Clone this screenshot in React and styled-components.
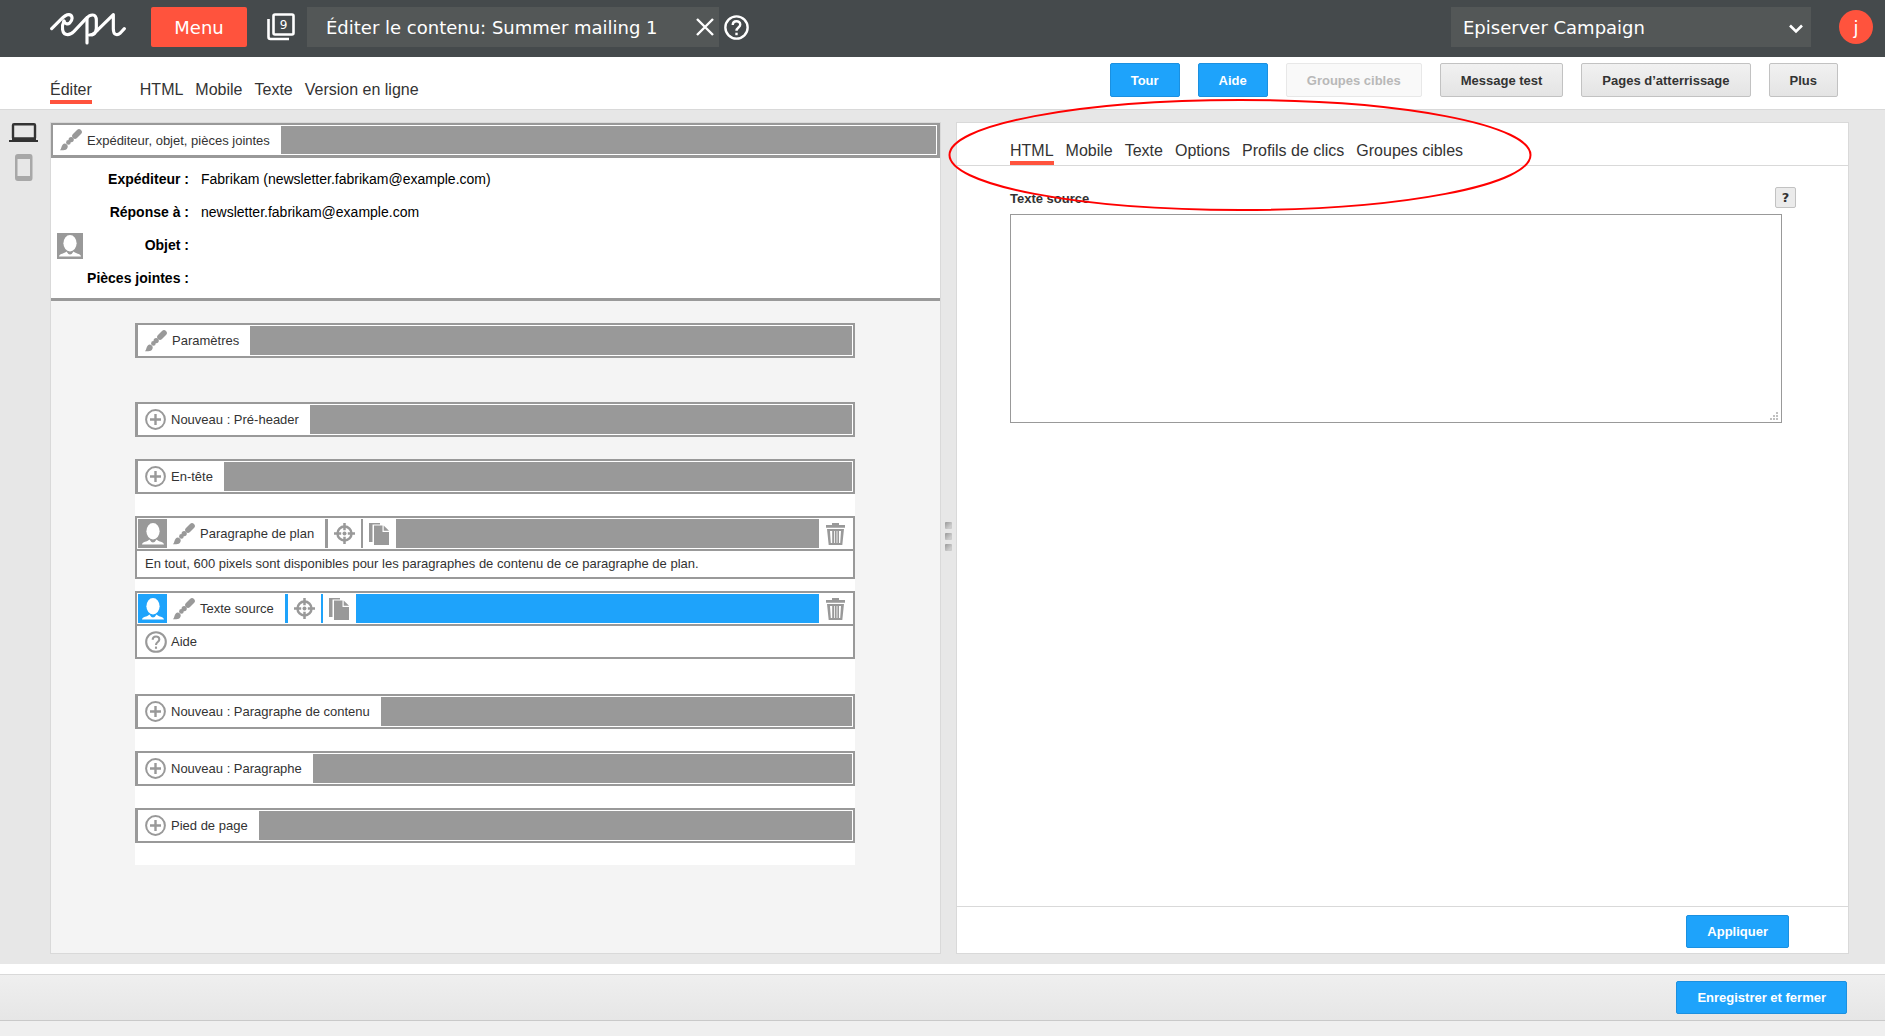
import styled, { createGlobalStyle } from "styled-components";

const App = () => {
    return (
        <AppStyled>
            <GlobalStyle />
            <TopBar />
            <SubNav />
            <Workspace>
                <DeviceRail />
                <TemplatePanel />
                <Splitter>
                    <i />
                    <i />
                    <i />
                </Splitter>
                <EditorPanel />
            </Workspace>
            <PageFooter />
        </AppStyled>
    );
};

export default App;

/* Icons ---------------------------*/
const EpiLogo = () => (
    <svg width="76" height="32" viewBox="0 0 228 96" fill="none" stroke="#ffffff" strokeWidth="9.5" strokeLinecap="round" strokeLinejoin="round">
        <path d="M5 47 L32 20 C44 8 50 4 57 5 C69 7 69 21 59 30 C53 35 45 32 42 25" />
        <path d="M42 24 C35 38 34 65 53 65 C60 65 65 62 72 55 L108 17 C121 2 139 1 139 22 L139 46 C138 64 126 66 118 66" />
        <path d="M111 14 L111 90" />
        <path d="M126 65 C134 63 138 57 144 50 L190 5 L190 48 C190 67 202 68 211 60 L223 47" />
    </svg>
);

const WindowsIcon = () => (
    <svg width="28" height="28" viewBox="0 0 28 28" fill="none" stroke="#ffffff">
        <rect x="6.5" y="1.5" width="20" height="20" rx="1.5" strokeWidth="2.6" />
        <path d="M1.5 6 V24 Q1.5 26 3.5 26 H22" strokeWidth="2.6" />
        <text x="16.5" y="16" fill="#ffffff" stroke="none" fontSize="12" textAnchor="middle">
            9
        </text>
    </svg>
);

const CloseIcon = () => (
    <svg width="18" height="18" viewBox="0 0 18 18" fill="none" stroke="#ffffff" strokeWidth="2.4">
        <path d="M1 1 L17 17 M17 1 L1 17" />
    </svg>
);

const HelpIcon = ({ size = 22 }) => (
    <svg width={size} height={size} viewBox="0 0 24 24" fill="none" stroke="currentColor" strokeWidth="2.3">
        <circle cx="12" cy="12" r="10.7" />
        <path d="M8.4 9.6 C8.4 4.8 15.6 4.8 15.6 9.2 C15.6 12 12 12 12 15.2" />
        <path d="M12 17 V19.4" />
    </svg>
);

const ChevronIcon = () => (
    <svg width="14" height="10" viewBox="0 0 14 10" fill="none" stroke="#ffffff" strokeWidth="2.6">
        <path d="M1 1.5 L7 7.5 L13 1.5" />
    </svg>
);

const LaptopIcon = () => (
    <svg width="30" height="20" viewBox="0 0 30 20" fill="none" stroke="#333333">
        <rect x="4" y="1.2" width="22" height="14.5" rx="1" strokeWidth="2.4" />
        <path d="M0 18 H29" strokeWidth="2" />
        <path d="M3 16 H27" strokeWidth="3" />
    </svg>
);

const PhoneIcon = () => (
    <svg width="18" height="28" viewBox="0 0 18 28">
        <path fill="#a8a8a8" fillRule="evenodd" d="M3 0 H15 Q17.5 0 17.5 3 V24 Q17.5 27 15 27 H3 Q0 27 0 24 V3 Q0 0 3 0 Z M2.5 5 V22 H15 V5 Z" />
    </svg>
);

const BrushIcon = () => (
    <svg width="22" height="22" viewBox="0 0 22 22" fill="#999999">
        <path d="M0 21.2 C1.8 19.5 1 17 3 15.2 C4.2 14.2 5.6 14.4 6.8 15.6 C8.2 17 8 18.8 6.8 19.9 C5.2 21.4 3 21.2 0 21.2 Z" />
        <circle cx="8.4" cy="13.4" r="2.3" />
        <circle cx="11.2" cy="10.6" r="2.6" />
        <path d="M15 7 L19 3" fill="none" stroke="#999999" strokeWidth="5.6" strokeLinecap="round" />
    </svg>
);

const PlusIcon = () => (
    <svg width="21" height="21" viewBox="0 0 21 21" fill="none" stroke="#999999" strokeWidth="2">
        <circle cx="10.5" cy="10.5" r="9.4" />
        <path d="M10.5 5 V16 M5 10.5 H16" strokeWidth="2.4" />
    </svg>
);

const TargetIcon = () => (
    <svg width="21" height="21" viewBox="0 0 21 21" fill="none" stroke="#999999" strokeWidth="2.5">
        <circle cx="10.5" cy="10.5" r="7" />
        <path d="M10.5 0 V7.2 M10.5 13.8 V21 M0 10.5 H7.2 M13.8 10.5 H21" />
        <circle cx="10.5" cy="10.5" r="2" fill="#999999" stroke="none" />
    </svg>
);

const CopyIcon = () => (
    <svg width="21" height="22" viewBox="0 0 21 22" fill="#999999">
        <path d="M0 0 H11 V1.5 H3.5 V19 H0 Z" />
        <path d="M5 2.5 H13.5 V9 H20 V22 H5 Z" />
        <path d="M14.7 2.5 L20 7.8 H14.7 Z" />
    </svg>
);

const TrashIcon = () => (
    <svg width="19" height="22" viewBox="0 0 19 22" fill="#999999">
        <path d="M6 0 H13 V2 H19 V4.8 H0 V2 H6 Z" />
        <path d="M1 6 H18 L16.3 22 H2.7 Z M4 8 L4.8 20 H6.2 V8 Z M8.2 8 V20 H9 V8 Z M10.6 8 V20 H11.4 V8 Z M13 8 V20 H14.2 L15 8 Z" fillRule="evenodd" />
    </svg>
);

const PersonIcon = () => (
    <svg width="22" height="22" viewBox="0 0 22 22" fill="#ffffff">
        <ellipse cx="11" cy="8.2" rx="6.6" ry="8.2" />
        <path d="M0 21.5 C0.5 18.5 5 19 7.5 16.5 Q9 19.4 11 19.4 Q13 19.4 14.5 16.5 C17 19 21.5 18.500 22 21.5 Z" />
    </svg>
);

/* Top bar ---------------------------*/
const TopBar = () => (
    <TopBarStyled>
        <LogoLink href="#" aria-label="Episerver">
            <EpiLogo />
        </LogoLink>
        <MenuButton type="button">Menu</MenuButton>
        <WindowsButton type="button">
            <WindowsIcon />
        </WindowsButton>
        <TitleBox>
            <h1>Éditer le contenu: Summer mailing 1</h1>
            <IconButton type="button" aria-label="Fermer">
                <CloseIcon />
            </IconButton>
        </TitleBox>
        <HelpButton type="button" aria-label="Aide">
            <HelpIcon size={25} />
        </HelpButton>
        <ProductSelect>
            <select aria-label="Produit" defaultValue="campaign">
                <option value="campaign">Episerver Campaign</option>
            </select>
            <ChevronIcon />
        </ProductSelect>
        <UserButton type="button">j</UserButton>
    </TopBarStyled>
);

const SubNav = () => (
    <SubNavStyled>
        <Tabs>
            <Tab href="#" $active $spaced>
                Éditer
            </Tab>
            <Tab href="#">HTML</Tab>
            <Tab href="#">Mobile</Tab>
            <Tab href="#">Texte</Tab>
            <Tab href="#">Version en ligne</Tab>
        </Tabs>
        <Actions>
            <Button type="button" $primary>
                Tour
            </Button>
            <Button type="button" $primary>
                Aide
            </Button>
            <Button type="button" disabled>
                Groupes cibles
            </Button>
            <Button type="button">Message test</Button>
            <Button type="button">Pages d’atterrissage</Button>
            <Button type="button">Plus</Button>
        </Actions>
    </SubNavStyled>
);

const DeviceRail = () => (
    <DeviceRailStyled>
        <IconButton type="button" aria-label="Ordinateur">
            <LaptopIcon />
        </IconButton>
        <IconButton type="button" aria-label="Mobile">
            <PhoneIcon />
        </IconButton>
    </DeviceRailStyled>
);

/* Template panel ---------------------------*/
const SimpleBar = ({ icon, children }) => (
    <Bar>
        <BarLabel type="button">
            {icon}
            {children}
        </BarLabel>
        <BarFill />
    </Bar>
);

const ParagraphBar = ({ title, selected, children }) => (
    <Paragraph>
        <ParagraphHead>
            <PersonBox $selected={selected}>
                <PersonIcon />
            </PersonBox>
            <BarLabel type="button">
                <BrushIcon />
                {title}
            </BarLabel>
            <ToolButton type="button" aria-label="Groupes cibles" $selected={selected} $line={3}>
                <TargetIcon />
            </ToolButton>
            <ToolButton type="button" aria-label="Copier" $selected={selected} $line={2}>
                <CopyIcon />
            </ToolButton>
            <BarFill $selected={selected} />
            <ToolButton type="button" aria-label="Supprimer">
                <TrashIcon />
            </ToolButton>
        </ParagraphHead>
        {children}
    </Paragraph>
);

const TemplatePanel = () => (
    <TemplatePanelStyled>
        <SenderBar>
            <BarLabel type="button">
                <BrushIcon />
                Expéditeur, objet, pièces jointes
            </BarLabel>
            <BarFill />
        </SenderBar>
        <SenderInfo>
            <div>
                <dt>Expéditeur :</dt>
                <dd>Fabrikam (newsletter.fabrikam@example.com)</dd>
            </div>
            <div>
                <dt>Réponse à :</dt>
                <dd>newsletter.fabrikam@example.com</dd>
            </div>
            <div>
                <PersonBadge>
                    <PersonIcon />
                </PersonBadge>
                <dt>Objet :</dt>
                <dd />
            </div>
            <div>
                <dt>Pièces jointes :</dt>
                <dd />
            </div>
        </SenderInfo>
        <Template>
            <Settings>
                <SimpleBar icon={<BrushIcon />}>Paramètres</SimpleBar>
            </Settings>
            <SimpleBar icon={<PlusIcon />}>Nouveau : Pré-header</SimpleBar>
            <Sheet>
                <SimpleBar icon={<PlusIcon />}>En-tête</SimpleBar>
                <Layout>
                    <ParagraphBar title="Paragraphe de plan">
                        <ParagraphNote>
                            En tout, 600 pixels sont disponibles pour les paragraphes de contenu de ce paragraphe de plan.
                        </ParagraphNote>
                    </ParagraphBar>
                    <ParagraphBar title="Texte source" selected>
                        <ParagraphHelp type="button">
                            <HelpIcon />
                            Aide
                        </ParagraphHelp>
                    </ParagraphBar>
                </Layout>
                <SimpleBar icon={<PlusIcon />}>Nouveau : Paragraphe de contenu</SimpleBar>
                <SimpleBar icon={<PlusIcon />}>Nouveau : Paragraphe</SimpleBar>
                <SimpleBar icon={<PlusIcon />}>Pied de page</SimpleBar>
            </Sheet>
        </Template>
    </TemplatePanelStyled>
);

/* Editor panel ---------------------------*/
const EditorPanel = () => (
    <EditorPanelStyled>
        <EditorTabs>
            <Tab href="#" $active>
                HTML
            </Tab>
            <Tab href="#">Mobile</Tab>
            <Tab href="#">Texte</Tab>
            <Tab href="#">Options</Tab>
            <Tab href="#">Profils de clics</Tab>
            <Tab href="#">Groupes cibles</Tab>
        </EditorTabs>
        <EditorBody>
            <FieldHead>
                <label htmlFor="source">Texte source</label>
                <QuestionButton type="button">?</QuestionButton>
            </FieldHead>
            <SourceField>
                <textarea id="source" />
                <svg width="8" height="8" viewBox="0 0 8 8" fill="#c0c0c0">
                    <path d="M6 0h2v2h-2z M3 3h2v2h-2z M6 3h2v2h-2z M0 6h2v2h-2z M3 6h2v2h-2z M6 6h2v2h-2z" />
                </svg>
            </SourceField>
        </EditorBody>
        <EditorFooter>
            <Button type="button" $primary $small>
                Appliquer
            </Button>
        </EditorFooter>
        <Highlight viewBox="0 0 584 114">
            <ellipse cx="292" cy="57" rx="290.5" ry="55" fill="none" stroke="#ff0000" strokeWidth="2" />
        </Highlight>
    </EditorPanelStyled>
);

const PageFooter = () => (
    <PageFooterStyled>
        <div className="bar">
            <Button type="button" $primary $small>
                Enregistrer et fermer
            </Button>
        </div>
    </PageFooterStyled>
);

/* Styles ---------------------------*/
const GlobalStyle = createGlobalStyle`
    * {
        box-sizing: border-box;
    }

    body {
        margin: 0;
        background-color: #ffffff;
        color: #333333;
        font-family: "Liberation Sans", Arial, sans-serif;
        font-size: 13px;
    }

    button,
    select,
    textarea {
        margin: 0;
        font-family: inherit;
    }

    svg {
        display: block;
        flex-shrink: 0;
    }
`;

const AppStyled = styled.div`
    display: flex;
    flex-direction: column;
    min-height: 100vh;
`;

const TopBarStyled = styled.header`
    display: flex;
    align-items: center;
    height: 57px;
    padding: 0 12px 3px 50px;
    background-color: #454a4c;
    color: #ffffff;
    font-family: "DejaVu Sans", Verdana, sans-serif;
    font-size: 18px;
`;

const LogoLink = styled.a`
    margin-right: 25px;
    padding-top: 3px;
`;

const MenuButton = styled.button`
    width: 96px;
    height: 40px;
    padding: 0;
    border: 0;
    border-radius: 2px;
    background-color: #ff533d;
    color: #ffffff;
    font-size: 18px;
`;

const IconButton = styled.button`
    padding: 0;
    border: 0;
    background: none;
    color: inherit;
`;

const WindowsButton = styled(IconButton)`
    margin: 0 12px 0 20px;
`;

const TitleBox = styled.div`
    display: flex;
    align-items: center;
    justify-content: space-between;
    width: 412px;
    height: 40px;
    padding: 0 5px 0 19px;
    background-color: #535757;

    h1 {
        margin: 0;
        font-size: 18px;
        font-weight: normal;
        white-space: nowrap;
    }
`;

const HelpButton = styled(IconButton)`
    margin-left: 5px;
`;

const ProductSelect = styled.div`
    position: relative;
    width: 360px;
    margin-left: auto;

    select {
        display: block;
        width: 100%;
        height: 40px;
        padding: 0 40px 0 12px;
        appearance: none;
        border: 0;
        border-radius: 0;
        background-color: #535757;
        color: #ffffff;
        font-size: 18px;
    }

    svg {
        position: absolute;
        top: 17px;
        right: 8px;
        pointer-events: none;
    }
`;

const UserButton = styled.button`
    width: 34px;
    height: 34px;
    margin-left: 28px;
    padding: 0;
    border: 0;
    border-radius: 50%;
    background-color: #ff533d;
    color: #ffffff;
    font-size: 18px;
`;

const SubNavStyled = styled.nav`
    display: flex;
    justify-content: space-between;
    height: 53px;
    padding: 0 47px 0 50px;
    border-bottom: 1px solid #d9d9d9;
`;

const Tabs = styled.div`
    display: flex;
    align-items: flex-end;
    gap: 12px;
    padding-bottom: 5px;
`;

const Tab = styled.a`
    margin-right: ${(props) => (props.$spaced ? "36px" : "0")};
    padding-bottom: 1px;
    border-bottom: 4px solid ${(props) => (props.$active ? "#ff533d" : "transparent")};
    color: #333333;
    font-size: 16px;
    line-height: 18px;
    text-decoration: none;
    white-space: nowrap;
`;

const Actions = styled.div`
    display: flex;
    gap: 18px;
    padding-top: 6px;
`;

const Button = styled.button`
    height: ${(props) => (props.$small ? "33px" : "34px")};
    padding: 0 20px;
    border: 1px solid ${(props) => (props.$primary ? "#1b90e0" : "#c2c2c2")};
    border-radius: 2px;
    background: ${(props) => (props.$primary ? "#1ea3fb" : "linear-gradient(#f1f1f1, #e4e4e4)")};
    color: ${(props) => (props.$primary ? "#ffffff" : "#333333")};
    font-size: 13px;
    font-weight: bold;
    white-space: nowrap;

    &:disabled {
        border-color: #e8e8e8;
        background: #f9f9f9;
        color: #b8b8b8;
    }
`;

const Workspace = styled.main`
    display: flex;
    flex-grow: 1;
    padding: 12px 36px 10px 0;
    background-color: #e7e7e7;
`;

const DeviceRailStyled = styled.div`
    display: flex;
    flex-direction: column;
    align-items: center;
    gap: 11px;
    width: 50px;
    padding: 1px 3px 0 0;
`;

const Splitter = styled.div`
    display: flex;
    flex-direction: column;
    align-items: center;
    justify-content: center;
    gap: 4px;
    width: 15px;
    padding-bottom: 3px;

    i {
        width: 7px;
        height: 7px;
        border-radius: 1px;
        background: linear-gradient(135deg, #999999, #cccccc 70%);
    }
`;

const TemplatePanelStyled = styled.section`
    flex: 1 1 2px;
    min-width: 0;
    border: 1px solid #d9d9d9;
    background-color: #f4f4f4;
`;

const Bar = styled.div`
    display: flex;
    height: 35px;
    padding: 1px;
    border: 2px solid #999999;
    border-left-width: 3px;
    background-color: #ffffff;
`;

const BarLabel = styled.button`
    display: flex;
    align-items: center;
    gap: 5px;
    padding: 0 11px 0 6px;
    border: 0;
    background-color: #ffffff;
    color: #333333;
    font-size: 13px;
    white-space: nowrap;
`;

const SenderBar = styled(Bar)`
    border-width: 2px 3px 3px 2px;
`;

const BarFill = styled.div`
    flex-grow: 1;
    background-color: ${(props) => (props.$selected ? "#1ea3fb" : "#999999")};
`;

const SenderInfo = styled.dl`
    margin: 0;
    padding: 5px 6px 3px;
    border-bottom: 3px solid #999999;
    background-color: #ffffff;
    color: #000000;
    font-size: 14px;
    line-height: 33px;

    div {
        display: flex;
        align-items: center;
        height: 33px;
    }

    dt {
        width: 132px;
        font-weight: bold;
        text-align: right;
        white-space: nowrap;
    }

    dd {
        margin: 0 0 0 12px;
    }
`;

const PersonBadge = styled.span`
    display: flex;
    justify-content: center;
    align-items: center;
    width: 26px;
    height: 26px;
    background-color: #999999;

    & + dt {
        width: 106px;
    }
`;

const Template = styled.div`
    padding: 22px 85px 22px 84px;
`;

const Settings = styled.div`
    margin-bottom: 44px;
`;

const Sheet = styled.div`
    display: flex;
    flex-direction: column;
    gap: 22px;
    margin-top: 22px;
    padding-bottom: 22px;
    background-color: #ffffff;
`;

const Layout = styled.div`
    display: flex;
    flex-direction: column;
    gap: 12px;
    padding-bottom: 13px;
`;

const Paragraph = styled.div`
    border: 2px solid #999999;
    background-color: #ffffff;
`;

const ParagraphHead = styled.div`
    display: flex;
    height: 33px;
    padding: 1px;
    border-bottom: 2px solid #999999;
`;

const PersonBox = styled.div`
    display: flex;
    align-items: center;
    justify-content: center;
    width: 29px;
    background-color: ${(props) => (props.$selected ? "#1ea3fb" : "#999999")};
`;

const ToolButton = styled.button`
    display: flex;
    align-items: center;
    padding: 0 ${(props) => (props.$line ? "6px" : "7px")};
    border: 0 solid ${(props) => (props.$selected ? "#1ea3fb" : "#999999")};
    border-left-width: ${(props) => props.$line || 0}px;
    background-color: #ffffff;
`;

const ParagraphNote = styled.p`
    margin: 0;
    padding: 0 8px;
    line-height: 26px;
`;

const ParagraphHelp = styled.button`
    display: flex;
    align-items: center;
    gap: 4px;
    height: 31px;
    padding: 0 8px;
    border: 0;
    background: none;
    color: #333333;
    font-size: 13px;

    svg {
        color: #999999;
    }
`;

const EditorPanelStyled = styled.section`
    position: relative;
    display: flex;
    flex: 1 1 4px;
    flex-direction: column;
    min-width: 0;
    border: 1px solid #d9d9d9;
    background-color: #ffffff;
`;

const EditorTabs = styled(Tabs)`
    height: 43px;
    padding: 0 53px;
    border-bottom: 1px solid #d9d9d9;
`;

const EditorBody = styled.div`
    flex-grow: 1;
    padding: 21px 52px 21px 53px;
`;

const FieldHead = styled.div`
    display: flex;
    justify-content: space-between;
    height: 27px;

    label {
        font-weight: bold;
        line-height: 24px;
    }
`;

const QuestionButton = styled.button`
    width: 21px;
    height: 21px;
    padding: 0;
    border: 1px solid #c2c2c2;
    border-radius: 2px;
    background-color: #ebebeb;
    color: #333333;
    font-family: "DejaVu Sans", Verdana, sans-serif;
    font-size: 13px;
    font-weight: bold;
    line-height: 19px;
`;

const SourceField = styled.div`
    position: relative;
    margin-right: 14px;

    textarea {
        display: block;
        width: 100%;
        height: 209px;
        padding: 4px;
        border: 1px solid #999999;
        background-color: #ffffff;
        font-size: 13px;
        resize: none;
    }

    svg {
        position: absolute;
        right: 4px;
        bottom: 3px;
    }
`;

const EditorFooter = styled.div`
    display: flex;
    justify-content: flex-end;
    padding: 8px 59px 5px;
    border-top: 1px solid #d9d9d9;
`;

/* Ellipse drawn round the editor tabs */
const Highlight = styled.svg`
    position: absolute;
    top: -25px;
    left: -9px;
    width: 584px;
    height: 114px;
    pointer-events: none;
`;

const PageFooterStyled = styled.footer`
    margin-top: 10px;
    padding-bottom: 15px;
    background-color: #efefef;

    .bar {
        display: flex;
        justify-content: flex-end;
        padding: 6px 38px;
        border-top: 1px solid #d9d9d9;
        border-bottom: 1px solid #c9c9c9;
        background: linear-gradient(#efefef, #e6e6e6);
    }
`;
